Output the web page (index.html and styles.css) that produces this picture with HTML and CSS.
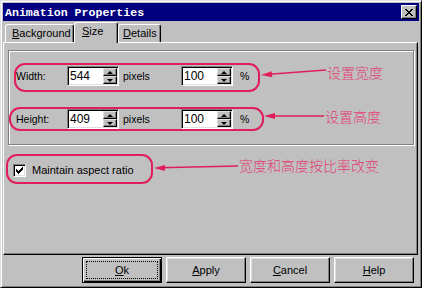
FILE: index.html
```html
<!DOCTYPE html>
<html lang="en">
  <head>
    <meta charset="UTF-8" />
    <title>Animation Properties</title>
    <link rel="stylesheet" href="styles.css">
  </head>
  <body>
    <div class="window">
      <div class="titlebar">
        <span class="title">Animation Properties</span>
        <div class="close-btn">
          <svg width="8" height="7" viewBox="0 0 8 7" shape-rendering="crispEdges">
            <path d="M0 0h2v1h-2zM6 0h2v1h-2zM1 1h2v1h-2zM5 1h2v1h-2zM2 2h4v1h-4zM3 3h2v1h-2zM2 4h4v1h-4zM1 5h2v1h-2zM5 5h2v1h-2zM0 6h2v1h-2zM6 6h2v1h-2z" fill="#000"/>
          </svg>
        </div>
      </div>

      <div class="tabs">
        <div class="tab tab-bg"><u>B</u>ackground</div>
        <div class="tab tab-size active"><u>S</u>ize</div>
        <div class="tab tab-details"><u>D</u>etails</div>
      </div>

      <div class="panel">
        <div class="group">
          <!-- width -->
          <div class="annot-row">
            <div class="mark mark-width">
              <span class="field-label">Width:</span>
              <div class="spin">
                <span class="spin-value">544</span>
                <span class="spin-btns"><i class="up"></i><i class="down"></i></span>
              </div>
              <span class="unit">pixels</span>
              <div class="spin">
                <span class="spin-value">100</span>
                <span class="spin-btns"><i class="up"></i><i class="down"></i></span>
              </div>
              <span class="pct">%</span>
            </div>
            <svg class="arrow" width="66" height="29" viewBox="0 0 66 29">
              <line x1="6" y1="11.6" x2="66" y2="7" stroke="#e01e5a" stroke-width="1.5"/>
              <polygon points="1,12 11.8,8.2 12.2,14.2" fill="#e01e5a"/>
            </svg>
            <span class="note note-width">设置宽度</span>
          </div>

          <!-- height -->
          <div class="annot-row row-height">
            <div class="mark mark-height">
              <span class="field-label">Height:</span>
              <div class="spin">
                <span class="spin-value">409</span>
                <span class="spin-btns"><i class="up"></i><i class="down"></i></span>
              </div>
              <span class="unit">pixels</span>
              <div class="spin">
                <span class="spin-value">100</span>
                <span class="spin-btns"><i class="up"></i><i class="down"></i></span>
              </div>
              <span class="pct">%</span>
            </div>
            <svg class="arrow" width="60" height="24" viewBox="0 0 60 24">
              <line x1="6" y1="9" x2="60" y2="9" stroke="#e01e5a" stroke-width="1.5"/>
              <polygon points="0,9 11,6 11,12" fill="#e01e5a"/>
            </svg>
            <span class="note note-height">设置高度</span>
          </div>
        </div>

        <!-- aspect ratio -->
        <div class="annot-row row-check">
          <div class="mark mark-check">
            <span class="checkbox">
              <svg width="7" height="7" viewBox="0 0 7 7" shape-rendering="crispEdges">
                <path d="M6 0h1v1h-1zM5 1h2v1h-2zM0 2h1v1h-1zM4 2h3v1h-3zM0 3h2v1h-2zM3 3h3v1h-3zM0 4h5v1h-5zM1 5h3v1h-3zM2 6h1v1h-1z" fill="#000"/>
              </svg>
            </span>
            <span class="check-label">Maintain aspect ratio</span>
          </div>
          <svg class="arrow" width="85" height="30" viewBox="0 0 85 30">
            <line x1="6" y1="13.8" x2="85" y2="12" stroke="#e01e5a" stroke-width="1.5"/>
            <polygon points="1,14 12,11 12,17" fill="#e01e5a"/>
          </svg>
          <span class="note note-check">宽度和高度按比率改变</span>
        </div>
      </div>

      <div class="buttons">
        <div class="btn btn-default"><span class="focus"><u>O</u>k</span></div>
        <div class="btn"><u>A</u>pply</div>
        <div class="btn"><u>C</u>ancel</div>
        <div class="btn"><u>H</u>elp</div>
      </div>
    </div>
  </body>
</html>
```

FILE: styles.css
```css
* {
  box-sizing: border-box;
}

body {
  margin: 0;
  background: #c0c0c0;
  font-family: "Liberation Sans", Arial, sans-serif;
  font-size: 10.5px;
  color: #000;
}

.window {
  width: 422px;
  height: 288px;
  border: 1px solid;
  border-color: #dfdfdf #000 #000 #dfdfdf;
  box-shadow: inset 1px 1px #fff, inset -1px -1px #808080;
  padding: 2px;
  display: flex;
  flex-direction: column;
}

/* title bar */
.titlebar {
  flex: none;
  height: 18px;
  background: #000080;
  display: flex;
  align-items: center;
  justify-content: space-between;
  padding: 0 2px;
}

.title {
  color: #fff;
  font-family: "Liberation Mono", monospace;
  font-weight: bold;
  font-size: 11.6px;
}

.close-btn {
  width: 16px;
  height: 14px;
  background: #c0c0c0;
  border: 1px solid;
  border-color: #fff #000 #000 #fff;
  box-shadow: inset -1px -1px #808080;
  display: flex;
  align-items: center;
  justify-content: center;
}

/* tabs */
.tabs {
  flex: none;
  height: 21px;
  display: flex;
  align-items: flex-end;
  padding-left: 2px;
}

.tab {
  height: 18px;
  border: 1px solid #fff;
  border-bottom: 0;
  border-right-color: #000;
  border-radius: 3px 3px 0 0;
  box-shadow: inset -1px 0 #808080;
  padding: 2px 0 0 6px;
  line-height: 13px;
  font-size: 11px;
  white-space: nowrap;
}

.tab-bg {
  width: 69px;
}

.tab-size {
  width: 44px;
  height: 21px;
  padding-left: 7px;
  margin-bottom: -1px;
  background: #c0c0c0;
  position: relative;
  z-index: 1;
}

.tab-details {
  width: 43px;
  padding-left: 4px;
}

/* page */
.panel {
  flex: none;
  height: 213px;
  margin-right: 1px;
  border: 1px solid;
  border-color: #fff #000 #000 #fff;
  box-shadow: inset -1px -1px #808080;
}

.group {
  width: 406px;
  height: 95px;
  margin: 7px 0 0 4px;
  padding-top: 12px;
  border: 1px solid #808080;
  box-shadow: inset 1px 1px #fff, 1px 1px #fff;
}

.annot-row {
  display: flex;
  align-items: flex-start;
}

.row-height {
  margin-top: 15px;
}

.row-check {
  margin: 9px 0 0 2px;
}

.mark {
  flex: none;
  border: 2px solid #e01e5a;
  border-radius: 11px;
  display: flex;
  align-items: center;
}

.mark-width {
  width: 246px;
  height: 29px;
  margin-left: 5px;
  padding: 1px 0 4px 0;
}

.mark-height {
  width: 255px;
  height: 24px;
  padding-left: 5px;
}

.mark-check {
  width: 147px;
  height: 30px;
  padding: 2px 0 0 5px;
}

.check-label {
  font-size: 11px;
}

.field-label {
  flex: none;
  width: 51px;
}

.spin {
  flex: none;
  width: 52px;
  height: 20px;
  padding: 1px;
  background: #fff;
  border: 1px solid;
  border-color: #808080 #fff #fff #808080;
  box-shadow: inset 1px 1px #000, inset -1px -1px #dfdfdf;
  display: flex;
  align-items: center;
}

.spin-value {
  flex: 1;
  padding-left: 1px;
  font-size: 12px;
}

.spin-btns {
  width: 14px;
  height: 16px;
  display: flex;
  flex-direction: column;
}

.spin-btns i {
  flex: 1;
  background: #c0c0c0;
  border: 1px solid;
  border-color: #dfdfdf #000 #000 #dfdfdf;
  box-shadow: inset -1px -1px #808080;
  display: flex;
  align-items: center;
  justify-content: center;
}

.spin-btns i::after {
  content: "";
  border-left: 3px solid transparent;
  border-right: 3px solid transparent;
}

.spin-btns .up::after {
  border-bottom: 3px solid #000;
}

.spin-btns .down::after {
  border-top: 3px solid #000;
}

.unit {
  flex: none;
  width: 62px;
  padding-left: 4px;
}

.pct {
  padding-left: 7px;
}

.checkbox {
  width: 13px;
  height: 13px;
  margin-right: 6px;
  background: #fff;
  border: 1px solid;
  border-color: #808080 #fff #fff #808080;
  box-shadow: inset 1px 1px #000, inset -1px -1px #dfdfdf;
  display: flex;
  align-items: center;
  justify-content: center;
}

.arrow {
  flex: none;
  display: block;
}

.note {
  font-family: "Noto Sans CJK SC", sans-serif;
  font-size: 14px;
  line-height: 14px;
  font-weight: 300;
  color: #e23c73;
  white-space: nowrap;
}

.note-width {
  margin: 2px 0 0 1px;
}

.note-height {
  margin: 2px 0 0 1px;
}

.note-check {
  margin: 4px 0 0 1px;
}

/* buttons */
.buttons {
  flex: none;
  display: flex;
  justify-content: flex-end;
  gap: 4px;
  padding: 2px 5px 0 0;
}

.btn {
  width: 80px;
  height: 26px;
  font-size: 11px;
  border: 1px solid;
  border-color: #fff #000 #000 #fff;
  box-shadow: inset -1px -1px #808080, inset 1px 1px #dfdfdf;
  display: flex;
  align-items: center;
  justify-content: center;
}

.btn-default {
  border-color: #000;
  box-shadow: inset 1px 1px #fff, inset -1px -1px #000, inset -2px -2px #808080;
  padding: 3px;
  align-items: stretch;
}

.focus {
  flex: 1;
  border: 1px dotted #000;
  display: flex;
  align-items: center;
  justify-content: center;
}
```
